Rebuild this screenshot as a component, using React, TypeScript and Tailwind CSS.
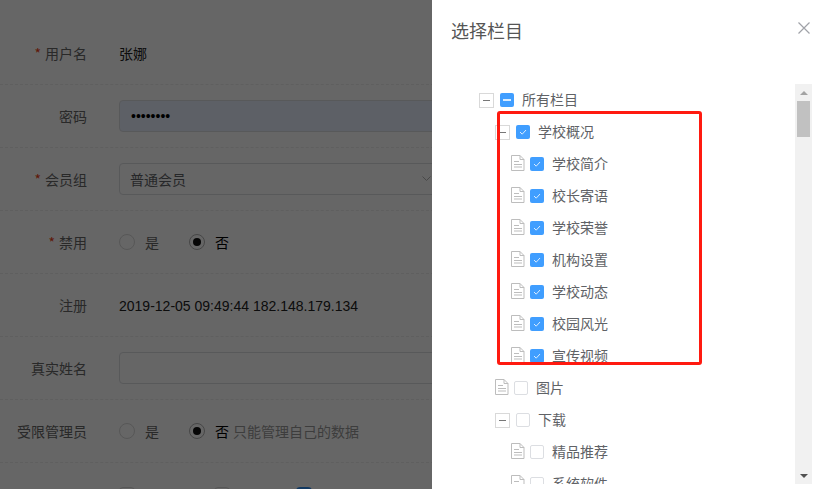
const cjk = "font-['Microsoft_YaHei','Noto_Sans_CJK_SC','Liberation_Sans',sans-serif]";

type Node = {
  label: string;
  level: number;
  leaf?: boolean;
  state: "on" | "off" | "half";
};

const nodes: Node[] = [
  { label: "所有栏目", level: 0, state: "half" },
  { label: "学校概况", level: 1, state: "on" },
  { label: "学校简介", level: 2, leaf: true, state: "on" },
  { label: "校长寄语", level: 2, leaf: true, state: "on" },
  { label: "学校荣誉", level: 2, leaf: true, state: "on" },
  { label: "机构设置", level: 2, leaf: true, state: "on" },
  { label: "学校动态", level: 2, leaf: true, state: "on" },
  { label: "校园风光", level: 2, leaf: true, state: "on" },
  { label: "宣传视频", level: 2, leaf: true, state: "on" },
  { label: "图片", level: 1, leaf: true, state: "off" },
  { label: "下载", level: 1, state: "off" },
  { label: "精品推荐", level: 2, leaf: true, state: "off" },
  { label: "系统软件", level: 2, leaf: true, state: "off" },
];

function Radio({ on }: { on?: boolean }) {
  return (
    <span
      className={
        on
          ? "flex h-4 w-4 items-center justify-center rounded-full border border-[#b0b0b0] bg-white"
          : "flex h-4 w-4 items-center justify-center rounded-full border border-[#d9d9d9] bg-white"
      }
    >
      {on && <span className="h-2 w-2 rounded-full bg-[#111]" />}
    </span>
  );
}

function Row({ label, req, children }: { label: string; req?: boolean; children: React.ReactNode }) {
  return (
    <div className="flex h-[63px] shrink-0 items-center border-b border-dashed border-[#eee]">
      <div className="w-[87px] shrink-0 text-right text-[14px] text-[#666]">
        {req && <span className="mr-1 text-[#ed4014]">*</span>}
        {label}
      </div>
      <div className="ml-8 flex min-w-0 flex-1 items-center text-[14px] text-[#333]">{children}</div>
    </div>
  );
}

function RadioPair({ note }: { note?: string }) {
  return (
    <div className="flex items-center text-[14px]">
      <Radio />
      <span className="ml-2.5 text-[#666]">是</span>
      <span className="ml-[30px]">
        <Radio on />
      </span>
      <span className="ml-2.5 text-black">否</span>
      {note && <span className="ml-1 text-[#999]">{note}</span>}
    </div>
  );
}

function Expander() {
  return (
    <span className="flex h-[15px] w-[15px] shrink-0 items-center justify-center border border-[#d9d9d9] bg-white">
      <span className="h-px w-[7px] bg-[#777]" />
    </span>
  );
}

function DocIcon() {
  return (
    <svg width="14" height="16" viewBox="0 0 14 16" fill="none" className="-mt-0.5 shrink-0" stroke="#bdbdbd">
      <path d="M.5 .5h8.500l4 4v11h-12.500z" />
      <path d="M9 .5v4h4" />
      <path d="M3 6.500h5M3 9.500h8M3 12h8" />
    </svg>
  );
}

function Check({ state }: { state: Node["state"] }) {
  if (state === "off") {
    return <span className="block h-[14px] w-[14px] shrink-0 rounded-[2px] border border-[#dcdee2] bg-white" />;
  }
  return (
    <span className="flex h-[14px] w-[14px] shrink-0 items-center justify-center rounded-[2px] bg-[#409eff]">
      {state === "half" ? (
        <span className="h-0.5 w-2 bg-[#d9ecff]" />
      ) : (
        <svg width="10" height="10" viewBox="0 0 10 10" fill="none" stroke="#d9ecff" strokeWidth="1">
          <path d="M2 5l2.200 2.200L8 3" />
        </svg>
      )}
    </span>
  );
}

function TreeRow({ node }: { node: Node }) {
  const pad = node.level === 0 ? "pl-[47px]" : node.level === 1 ? "pl-[63px]" : "pl-[79px]";
  return (
    <div className={`flex h-8 shrink-0 items-center ${pad}`}>
      {node.leaf ? <DocIcon /> : <Expander />}
      <span className={node.leaf ? "ml-[5px]" : "ml-1.5"}>
        <Check state={node.state} />
      </span>
      <span className="ml-2 pb-0.5 text-[14px] text-[#606266]">{node.label}</span>
    </div>
  );
}

function Scrollbar() {
  return (
    <div className="flex w-[17px] shrink-0 flex-col items-center bg-[#f1f1f1]">
      <div className="flex h-[17px] items-center justify-center">
        <span className="h-0 w-0 border-x-4 border-b-4 border-x-transparent border-b-[#a3a3a3]" />
      </div>
      <div className="h-9 w-[13px] bg-[#c1c1c1]" />
      <div className="flex-1" />
      <div className="flex h-[17px] items-center justify-center">
        <span className="h-0 w-0 border-x-4 border-t-4 border-x-transparent border-t-[#505050]" />
      </div>
    </div>
  );
}

export default function App() {
  return (
    <div className={`relative h-[489px] w-[825px] overflow-hidden bg-white ${cjk}`}>
      <div className="flex h-[489px] flex-col pt-[22px]">
        <Row label="用户名" req>
          <span className="text-[#222]">张娜</span>
        </Row>
        <Row label="密码">
          <div className="flex h-8 flex-1 items-center rounded border border-[#dcdee2] bg-[#e8f0fe] px-[11px] font-['Liberation_Sans',sans-serif] text-[14px] text-black">
            ••••••••
          </div>
        </Row>
        <Row label="会员组" req>
          <div className="flex h-8 w-[330px] items-center justify-between rounded border border-[#dcdee2] pl-[10px] pr-[17px] text-[#606266]">
            普通会员
            <svg width="9" height="6" viewBox="0 0 9 6" fill="none" stroke="#b5b5b5">
              <path d="M.5 .5l4 4 4-4" />
            </svg>
          </div>
        </Row>
        <Row label="禁用" req>
          <RadioPair />
        </Row>
        <Row label="注册">
          <span className="pt-0.5 font-['Liberation_Sans',sans-serif] text-[#222]">2019-12-05 09:49:44 182.148.179.134</span>
        </Row>
        <Row label="真实姓名">
          <div className="h-8 flex-1 rounded border border-[#dcdee2]" />
        </Row>
        <Row label="受限管理员">
          <RadioPair note="只能管理自己的数据" />
        </Row>
        <div className="ml-[119px] flex pt-6">
          <span className="h-4 w-4 rounded-sm border border-[#d9d9d9]" />
          <span className="ml-[79px] h-4 w-4 rounded-sm border border-[#d9d9d9]" />
          <span className="ml-[66px] h-4 w-4 rounded-sm bg-[#2d8cf0]" />
        </div>
      </div>

      <div className="absolute inset-0 bg-black/60" />

      <div className="absolute inset-y-0 left-[432px] right-0 flex flex-col bg-white">
        <div className="flex h-[84px] shrink-0 justify-between pl-[19px] pr-[15px] pt-[18px]">
          <span className="text-[18px] leading-6 text-[#555]">选择栏目</span>
          <svg width="12" height="12" viewBox="0 0 12 12" className="mt-1" stroke="#a0a2a8" strokeWidth="1.2">
            <path d="M.5 .5l11 11M11.500 .5l-11 11" />
          </svg>
        </div>
        <div className="flex h-[400px] shrink-0 pr-[13px]">
          <div className="flex min-w-0 flex-1 flex-col overflow-hidden">
            {nodes.map((n) => (
              <TreeRow key={n.label} node={n} />
            ))}
          </div>
          <Scrollbar />
        </div>
      </div>

      <div className="absolute left-[497px] top-[111px] h-[254px] w-[205px] rounded-[3px] border-[3px] border-[#ff1a10]" />
    </div>
  );
}
